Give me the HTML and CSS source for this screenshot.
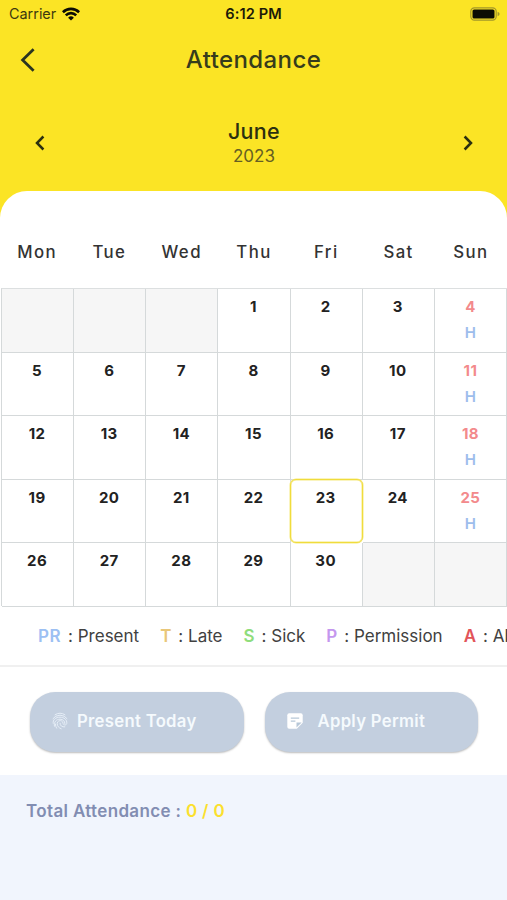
FILE: index.html
```html
<!DOCTYPE html>
<html lang="en">
  <head>
    <meta charset="UTF-8" />
    <meta name="viewport" content="width=device-width, initial-scale=1.0" />
    <title>Attendance</title>
    <link rel="stylesheet" href="styles.css">
  </head>
  <body>
    <div class="status">
      <div class="carrier">
        <span>Carrier</span>
        <svg width="18" height="14" viewBox="0 0 18 14" fill="none" stroke="#0c0c04" stroke-width="2.6">
          <path d="M0.9 5.2a11.6 11.6 0 0 1 16.2 0" />
          <path d="M3.8 8.3a7.4 7.4 0 0 1 10.4 0" />
          <path d="M9 13.6L6.1 10.7a4.2 4.2 0 0 1 5.8 0z" fill="#0c0c04" stroke="none" />
        </svg>
      </div>
      <b class="time">6:12 PM</b>
      <svg class="battery" width="30" height="14" viewBox="0 0 30 14">
        <rect x="0.8" y="0.8" width="25.4" height="12.4" rx="3.6" fill="none" stroke="#a3962a" stroke-width="1.2" />
        <rect x="2.5" y="2.5" width="22" height="9" rx="1.6" fill="#0c0c04" />
        <path d="M27.6 4.7q2 .8 2 2.3t-2 2.3z" fill="#a3962a" />
      </svg>
    </div>

    <div class="header">
      <svg class="back" width="16" height="24" viewBox="0 0 16 24" fill="none" stroke="#2b3420" stroke-width="2.8">
        <path d="M13.6 1.2L2.6 12l11 10.8" />
      </svg>
      <h1>Attendance</h1>
    </div>

    <div class="month">
      <svg class="arrow" width="10" height="16" viewBox="0 0 10 16" fill="none" stroke="#2b3010" stroke-width="2.5">
        <path d="M8.4 1.5L2 8l6.4 6.5" />
      </svg>
      <div class="monthText">
        <h2>June</h2>
        <p>2023</p>
      </div>
      <svg class="arrow" width="10" height="16" viewBox="0 0 10 16" fill="none" stroke="#2b3010" stroke-width="2.5">
        <path d="M1.6 1.5L8 8l-6.4 6.5" />
      </svg>
    </div>

    <div class="card">
      <div class="week">
        <span>Mon</span><span>Tue</span><span>Wed</span><span>Thu</span><span>Fri</span><span>Sat</span><span>Sun</span>
      </div>

      <div class="days">
        <div class="day empty"></div>
        <div class="day empty"></div>
        <div class="day empty"></div>
        <div class="day">1</div>
        <div class="day">2</div>
        <div class="day">3</div>
        <div class="day sun">4<span>H</span></div>

        <div class="day">5</div>
        <div class="day">6</div>
        <div class="day">7</div>
        <div class="day">8</div>
        <div class="day">9</div>
        <div class="day">10</div>
        <div class="day sun">11<span>H</span></div>

        <div class="day">12</div>
        <div class="day">13</div>
        <div class="day">14</div>
        <div class="day">15</div>
        <div class="day">16</div>
        <div class="day">17</div>
        <div class="day sun">18<span>H</span></div>

        <div class="day">19</div>
        <div class="day">20</div>
        <div class="day">21</div>
        <div class="day">22</div>
        <div class="day today">23</div>
        <div class="day">24</div>
        <div class="day sun">25<span>H</span></div>

        <div class="day">26</div>
        <div class="day">27</div>
        <div class="day">28</div>
        <div class="day">29</div>
        <div class="day">30</div>
        <div class="day empty"></div>
        <div class="day empty"></div>
      </div>

      <div class="legend">
        <div class="item"><b class="pr">PR</b><span>: Present</span></div>
        <div class="item"><b class="late">T</b><span>: Late</span></div>
        <div class="item"><b class="sick">S</b><span>: Sick</span></div>
        <div class="item"><b class="permission">P</b><span>: Permission</span></div>
        <div class="item"><b class="absent">A</b><span>: Absent</span></div>
      </div>

      <div class="buttons">
        <button class="btn present">
          <svg width="16" height="18" viewBox="0 0 16 18" fill="none" stroke="#e6eef7" stroke-width="1" stroke-linecap="round">
            <path d="M3 2.8Q8-.6 13 2.8" />
            <path d="M1 6.6Q3.4 3.2 8 3.2t7 3.4" />
            <path d="M1.2 11.4C.4 7.6 4 5.2 8 5.2s7.2 2.6 6.8 6.2c-.3 2.2-3.6 2-3.8-.2-.2-3.6-5.8-3.4-5.8.4 0 2.4 1.6 4.4 4 5.2" />
            <path d="M2.4 14.2C1.6 10 4.4 7.2 8 7.2c3 0 4.9 1.9 4.9 4.3" />
            <path d="M8 11.2c0 2.6 2 4 4.8 3.7M4.6 16.2C3.9 15 3.4 13.6 3.4 12" />
          </svg>
          <span>Present Today</span>
        </button>
        <button class="btn permit">
          <svg width="16" height="16" viewBox="0 0 16 16">
            <path d="M2.2.3h11.6q1.9 0 1.9 1.9v7.6l-5.9 5.9H2.2Q.3 15.7.3 13.8V2.2Q.3.3 2.2.3z" fill="#fff" />
            <path d="M3.8 5.2h8.4M3.8 8.2h4.6" stroke="#b7c7d8" stroke-width="1.3" />
            <path d="M9.5 14.6V9.5h5.1z" fill="#b7c7d8" />
          </svg>
          <span>Apply Permit</span>
        </button>
      </div>
    </div>

    <div class="total">Total Attendance : <span>0 / 0</span></div>
  </body>
</html>
```
FILE: styles.css
```css
* {
  margin: 0;
  padding: 0;
  box-sizing: border-box;
}
body {
  height: 900px;
  background-color: #fbe425;
  font-family: Inter, "Liberation Sans", sans-serif;
  font-feature-settings: "calt" 0; /* keeps the colons on the baseline */
  overflow: hidden;
  display: flex;
  flex-direction: column;
}
/* status bar */
.status {
  display: grid;
  grid-template-columns: 1fr auto 1fr;
  align-items: center;
  height: 27px;
  padding: 0 7px;
  font-size: 14.4px;
  color: #1c1b08;
}
.carrier {
  display: flex;
  align-items: center;
  gap: 6px;
  padding-left: 2px;
}
.carrier span {
  color: #3d390f;
}
.time {
  font-size: 14.6px;
  font-weight: 600;
  letter-spacing: 0.1px;
}
.battery {
  justify-self: end;
}
/* title */
.header {
  display: grid;
  grid-template-columns: 40px 1fr 40px;
  align-items: center;
  height: 65px;
  padding: 0 20px;
}
.header h1 {
  text-align: center;
  font-size: 24px;
  font-weight: 500;
  letter-spacing: 0.4px;
  color: #363c1c;
}
/* month switcher */
.month {
  display: flex;
  justify-content: space-between;
  align-items: center;
  height: 99px;
  padding: 2px 34px 0 35px;
}
.monthText {
  text-align: center;
}
.monthText h2 {
  font-size: 21.5px;
  font-weight: 500;
  line-height: 26px;
  letter-spacing: 0.3px;
  color: #2b3010;
}
.monthText p {
  font-size: 17px;
  line-height: 24px;
  color: #665f22;
}
/* calendar */
.card {
  height: 584px;
  border-radius: 27px 27px 0 0;
  background-color: #fff;
}
.week {
  display: grid;
  grid-template-columns: repeat(7, 1fr);
  height: 97px;
  padding-left: 1px;
  line-height: 122px;
  text-align: center;
  font-size: 16.8px;
  font-weight: 500;
  letter-spacing: 1.4px;
  color: #333;
}
.days {
  display: grid;
  grid-template-columns: repeat(7, 1fr);
  grid-auto-rows: 63.5px;
  height: 318px;
  margin-left: 1px;
  border-top: 1px solid #dcdfe0;
  border-left: 1px solid #d5d9da;
}
.day {
  padding-top: 8px;
  border-right: 1px solid #d5d9da;
  border-bottom: 1px solid #d5d9da;
  text-align: center;
  font-size: 15px;
  font-weight: 700;
  line-height: 20px;
  letter-spacing: 0.4px;
  text-indent: -1px;
  color: #222;
}
.day span {
  display: block;
  margin-top: 6px;
  font-weight: 600;
  text-indent: 0;
  color: #9dbdec;
}
.sun {
  text-indent: 0;
  color: #f38a8c;
}
.empty {
  background-color: #f6f6f6;
}
.today {
  margin: -1px 0 0 -1px;
  border: 1px solid #f0dc3c;
  border-radius: 6px;
  background-color: #fff;
  box-shadow: inset 0 0 0 0.5px #f6e97c, 0 0 0 0.5px #f6e97c;
}
.legend {
  display: flex;
  gap: 21px;
  height: 61px;
  padding-left: 38px;
  border-bottom: 2px solid #f0f0f0;
  line-height: 61px;
  font-size: 17px;
  white-space: nowrap;
  overflow: hidden;
  color: #414141;
}
.item {
  display: flex;
  flex-shrink: 0;
  gap: 7px;
}
.item b {
  font-weight: 600;
}
.pr {
  letter-spacing: 0.5px;
  color: #9cc0f3;
}
.late {
  color: #e9c779;
}
.sick {
  color: #8fdd7c;
}
.permission {
  color: #c497ee;
}
.absent {
  color: #e25459;
}
/* buttons */
.buttons {
  display: flex;
  gap: 21px;
  padding: 25px 29px 0 30px;
}
.btn {
  flex: 1;
  display: flex;
  align-items: center;
  height: 60px;
  padding: 0 0 2px 22px;
  border: 0;
  border-radius: 25px;
  background-color: #c3cfdf;
  box-shadow: 0 1px 2px #bcbcbc;
  font-family: inherit;
  font-size: 16.7px;
  font-weight: 600;
  letter-spacing: 0.3px;
  color: #f5fafd;
}
.present {
  gap: 9px;
}
.permit {
  gap: 15px;
}
.total {
  flex: 1;
  padding: 24px 26px;
  background-color: #f1f5fd;
  font-size: 17px;
  font-weight: 600;
  line-height: 24px;
  letter-spacing: 0.35px;
  color: #828db2;
}
.total span {
  color: #fbe02e;
}
```
